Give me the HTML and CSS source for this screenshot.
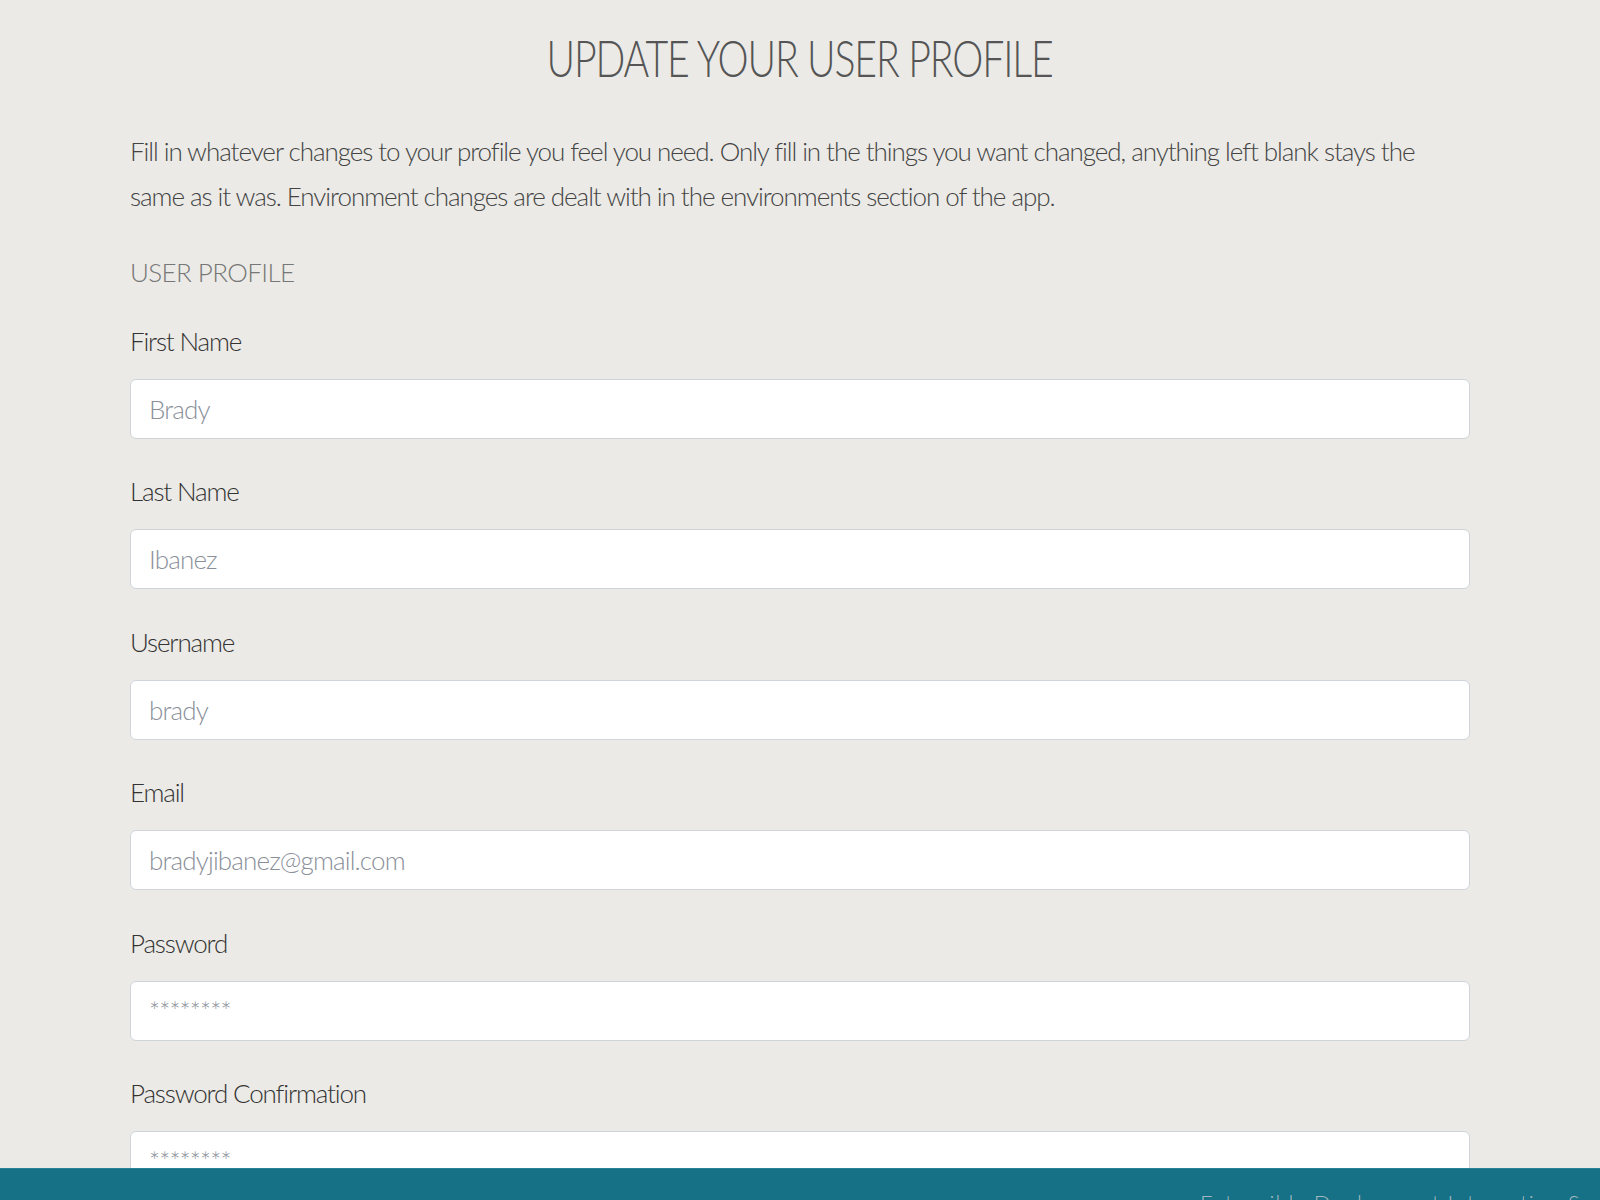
FILE: index.html
```html
<!DOCTYPE html>
<html lang="en">
<head>
<meta charset="utf-8">
<title>Update your user profile</title>
<link rel="stylesheet" href="styles.css">
</head>
<body>
<main class="page">
  <h1 class="title"><span class="title-text">UPDATE YOUR USER PROFILE</span></h1>
  <p class="intro">Fill in whatever changes to your profile you feel you need. Only fill in the things you want changed, anything left blank stays the same as it was. Environment changes are dealt with in the environments section of the app.</p>
  <h3 class="section">USER PROFILE</h3>
  <form class="form">
    <div class="field">
      <label class="label" for="first">First Name</label>
      <input class="input" id="first" type="text" placeholder="Brady">
    </div>
    <div class="field">
      <label class="label" for="last">Last Name</label>
      <input class="input" id="last" type="text" placeholder="Ibanez">
    </div>
    <div class="field">
      <label class="label" for="user">Username</label>
      <input class="input" id="user" type="text" placeholder="brady">
    </div>
    <div class="field">
      <label class="label" for="email">Email</label>
      <input class="input" id="email" type="text" placeholder="bradyjibanez@gmail.com">
    </div>
    <div class="field">
      <label class="label" for="pw">Password</label>
      <input class="input" id="pw" type="text" placeholder="********">
    </div>
    <div class="field">
      <label class="label" for="pwc">Password Confirmation</label>
      <input class="input" id="pwc" type="text" placeholder="********">
    </div>
  </form>
</main>
<footer class="footer">
  <span class="footer-text">Extensible Deployment Integration System</span>
</footer>
</body>
</html>
```

FILE: styles.css
```css
html, body {
  margin: 0;
  padding: 0;
}
body {
  background: #ebeae6;
  font-family: "Lato", "Open Sans", sans-serif;
  font-weight: 300;
  color: #444;
  overflow: hidden;
  height: 1200px;
}
.page {
  width: 1340px;
  margin: 0 auto;
  padding-top: 28px;
}
.title {
  margin: 0;
  text-align: center;
  font-size: 51px;
  line-height: 60px;
  font-weight: 300;
  color: #555;
}
.title-text {
  display: inline-block;
  letter-spacing: -1.5px;
  transform: scaleX(0.77);
  transform-origin: center;
}
.intro {
  margin: 41px 0 0;
  font-size: 26px;
  line-height: 45px;
  color: #444;
  letter-spacing: -1.05px;
}
.section {
  margin: 35px 0 0;
  font-size: 26px;
  line-height: 36px;
  font-weight: 300;
  color: #777;
  letter-spacing: -0.6px;
}
.form {
  margin-top: 33px;
  display: flex;
  flex-direction: column;
  gap: 34.4px;
}
.field {
  display: flex;
  flex-direction: column;
  gap: 20px;
}
.label {
  font-size: 26px;
  line-height: 36px;
  color: #333;
  letter-spacing: -1.15px;
}
.input {
  box-sizing: border-box;
  height: 60px;
  width: 100%;
  margin: 0;
  padding: 0 18px;
  border: 1px solid #ced4da;
  border-radius: 6px;
  background: #fff;
  font-family: inherit;
  font-weight: 300;
  font-size: 26px;
  letter-spacing: -0.85px;
  color: #555;
  outline: none;
}
.input::placeholder {
  color: #8a8f99;
}
.footer {
  position: fixed;
  left: 0;
  right: 0;
  bottom: 0;
  height: 32px;
  overflow: hidden;
  background: #167186;
  border-top: 1px solid #2a8296;
  box-sizing: border-box;
  padding-left: 1200px;
  padding-top: 19px;
  white-space: nowrap;
  font-size: 22px;
  line-height: 30px;
}
.footer-text {
  font-size: 22px;
  line-height: 30px;
  color: #a3b9c0;
  letter-spacing: 1px;
}
```
